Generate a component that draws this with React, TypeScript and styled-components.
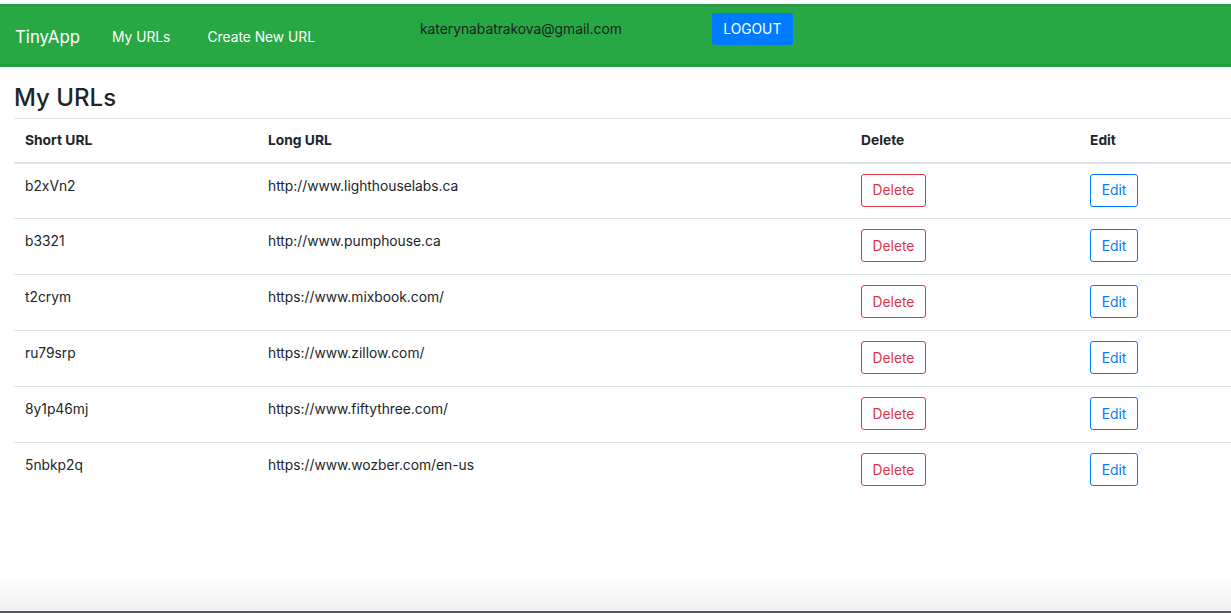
import styled, { createGlobalStyle } from "styled-components";

const GlobalStyle = createGlobalStyle`
  html, body {
    margin: 0;
    padding: 0;
    background: #ffffff;
  }
  body {
    font-family: Inter, "Liberation Sans", sans-serif;
    color: #212529;
  }
  * {
    box-sizing: border-box;
  }
`

const Page = styled.div`
  display: flex;
  flex-direction: column;
  min-height: 100vh;
  padding-top: 4px;
`

const Navbar = styled.nav`
  display: flex;
  align-items: center;
  height: 63px;
  padding: 0 15px;
  background: #28a745;
  border-top: 3px solid #2a9c45;
  border-bottom: 3px solid #1f9e3d;
`

const Brand = styled.span`
  font-size: 16.8px;
  color: #ffffff;
  margin-right: 32px;
  padding-top: 2px;
`

const NavLink = styled.span`
  font-size: 13.8px;
  color: #ffffff;
  margin-right: 37px;
  padding-top: 2px;
`

const UserArea = styled.div`
  display: flex;
  align-items: center;
  align-self: flex-start;
  margin-top: 6px;
  margin-left: 68px;
`

const Email = styled.span`
  font-size: 13.8px;
  color: #1b1f22;
  margin-right: 90px;
  margin-top: -1px;
`

const LogoutButton = styled.button`
  height: 32px;
  width: 81px;
  border: none;
  border-radius: 3px;
  background: #007bff;
  color: #ffffff;
  font-family: inherit;
  font-size: 13.8px;
  padding: 0;
`

const Heading = styled.h1`
  font-size: 24px;
  font-weight: 500;
  margin: 0;
  padding: 16px 0 0 14px;
  height: 51px;
  line-height: 30px;
`

const Table = styled.table`
  margin-left: 14px;
  width: calc(100% - 14px);
  border-collapse: collapse;
  font-size: 13.8px;
  table-layout: fixed;
`

const HeadCell = styled.th`
  text-align: left;
  font-weight: 700;
  padding: 10px 11px;
  height: 44px;
  border-top: 1px solid #dee2e6;
  border-bottom: 2px solid #dee2e6;
`

const Cell = styled.td`
  vertical-align: top;
  padding: 10px 11px;
  line-height: 25px;
  height: 56px;
  border-top: 1px solid #dee2e6;
`

const OutlineButton = styled.button<{ tone: string; w: number }>`
  display: block;
  height: 33px;
  width: ${(p) => p.w}px;
  border: 1px solid ${(p) => p.tone};
  color: ${(p) => p.tone};
  background: transparent;
  border-radius: 3px;
  font-family: inherit;
  font-size: 13.8px;
  padding: 0;
`

const Bottom = styled.div`
  flex: 1;
  background: linear-gradient(to bottom, #ffffff 0%, #ffffff 70%, #f1f1f3 100%);
  border-bottom: 2px solid #58595d;
`

const urls = [
  ["b2xVn2", "http://www.lighthouselabs.ca"],
  ["b3321", "http://www.pumphouse.ca"],
  ["t2crym", "https://www.mixbook.com/"],
  ["ru79srp", "https://www.zillow.com/"],
  ["8y1p46mj", "https://www.fiftythree.com/"],
  ["5nbkp2q", "https://www.wozber.com/en-us"],
];

export default function App() {
  return (
    <Page>
      <GlobalStyle />
      <Navbar>
        <Brand>TinyApp</Brand>
        <NavLink>My URLs</NavLink>
        <NavLink>Create New URL</NavLink>
        <UserArea>
          <Email>katerynabatrakova@gmail.com</Email>
          <LogoutButton>LOGOUT</LogoutButton>
        </UserArea>
      </Navbar>
      <Heading>My URLs</Heading>
      <Table>
        <colgroup>
          <col style={{ width: 243 }} />
          <col style={{ width: 593 }} />
          <col style={{ width: 229 }} />
          <col />
        </colgroup>
        <thead>
          <tr>
            <HeadCell>Short URL</HeadCell>
            <HeadCell>Long URL</HeadCell>
            <HeadCell>Delete</HeadCell>
            <HeadCell>Edit</HeadCell>
          </tr>
        </thead>
        <tbody>
          {urls.map(([short, long]) => (
            <tr key={short}>
              <Cell>{short}</Cell>
              <Cell>{long}</Cell>
              <Cell>
                <OutlineButton tone="#dc3545" w={65}>Delete</OutlineButton>
              </Cell>
              <Cell>
                <OutlineButton tone="#007bff" w={48}>Edit</OutlineButton>
              </Cell>
            </tr>
          ))}
        </tbody>
      </Table>
      <Bottom />
    </Page>
  );
}
